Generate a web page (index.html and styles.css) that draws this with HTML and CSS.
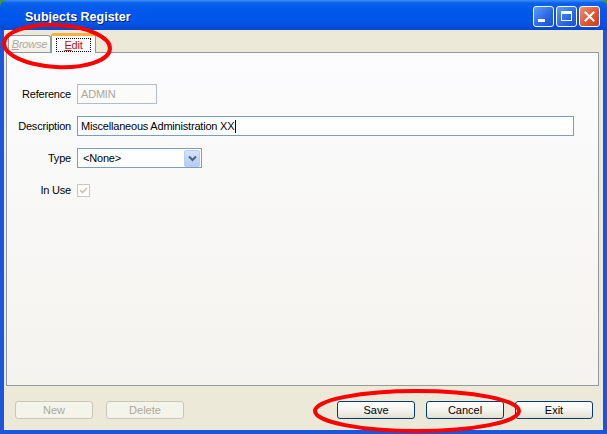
FILE: index.html
```html
<!DOCTYPE html>
<html lang="en">
<head>
  <meta charset="UTF-8">
  <title>Subjects Register</title>
  <link rel="stylesheet" href="styles.css">
</head>
<body>
  <div class="window">
    <div class="titlebar">
      <span class="title">Subjects Register</span>
      <div class="caption-buttons">
        <span class="cap cap-min"><span class="min-bar"></span></span>
        <span class="cap cap-max"><span class="max-box"></span></span>
        <span class="cap cap-close">
          <svg width="11" height="11" viewBox="0 0 11 11"><path d="M1.5 1.5 L9.5 9.5 M9.5 1.5 L1.5 9.5" stroke="#fff" stroke-width="2" stroke-linecap="square"/></svg>
        </span>
      </div>
    </div>

    <div class="client">
      <div class="tabs">
        <span class="tab tab-off"><u>B</u>rowse</span>
        <span class="tab tab-on"><span class="focus"><u>E</u>dit</span></span>
      </div>

      <div class="panel">
        <div class="form">
          <label class="lbl">Reference</label>
          <div class="field field-ref">ADMIN</div>

          <label class="lbl">Description</label>
          <div class="field field-desc">Miscellaneous Administration XX<span class="caret"></span></div>

          <label class="lbl">Type</label>
          <div class="field field-select">
            <span class="select-text">&lt;None&gt;</span>
            <span class="select-btn">
              <svg width="9" height="7" viewBox="0 0 9 7"><path d="M1 1.5 L4.5 5 L8 1.5" fill="none" stroke="#4d6185" stroke-width="2"/></svg>
            </span>
          </div>

          <label class="lbl">In Use</label>
          <div class="check-cell">
            <span class="check">
              <svg width="11" height="11" viewBox="0 0 11 11"><path d="M2 5 L4.5 7.5 L9 3" fill="none" stroke="#c4c2b5" stroke-width="1.6"/></svg>
            </span>
          </div>
        </div>
      </div>

      <div class="buttons">
        <div class="btn-group btn-group-left">
          <button class="btn" disabled>New</button>
          <button class="btn" disabled>Delete</button>
        </div>
        <div class="btn-group">
          <button class="btn">Save</button>
          <button class="btn">Cancel</button>
          <button class="btn">Exit</button>
        </div>
      </div>
    </div>

    <svg class="marks" width="607" height="434" viewBox="0 0 607 434">
      <ellipse cx="57" cy="46" rx="53" ry="21" fill="none" stroke="#f00" stroke-width="4" transform="rotate(3 57 46)"/>
      <ellipse cx="417" cy="411" rx="102" ry="20" fill="none" stroke="#f00" stroke-width="4"/>
    </svg>
  </div>
</body>
</html>
```

FILE: styles.css
```css
* {
  box-sizing: border-box;
}
body {
  margin: 0;
  background: #3a9a3a;
  font-family: 'Liberation Sans', Arial, sans-serif;
  font-size: 11px;
  letter-spacing: -0.2px;
  color: #000;
}
.window {
  position: relative;
  width: 607px;
  height: 434px;
  display: flex;
  flex-direction: column;
}

/* title bar */
.titlebar {
  height: 30px;
  display: flex;
  align-items: center;
  justify-content: space-between;
  padding: 0 7px 0 25px;
  border-radius: 7px 7px 0 0;
  background: linear-gradient(#3d8ef8 0, #0a62ea 3px, #0058ee 10px, #0255e8 22px, #0348d2 30px);
}
.title {
  color: #fff;
  font-weight: bold;
  font-size: 12.5px;
  letter-spacing: 0;
  padding-top: 4px;
  text-shadow: 1px 1px 0 #0a1e8a;
}
.caption-buttons {
  display: flex;
  gap: 2px;
  padding-top: 2px;
}
.cap {
  width: 21px;
  height: 21px;
  border: 1px solid #fff;
  border-radius: 3px;
  background: linear-gradient(135deg, #5e9cfb, #2a66e6 60%, #1b50d0);
  display: flex;
  align-items: center;
  justify-content: center;
  position: relative;
}
.min-bar {
  position: absolute;
  left: 4px;
  bottom: 4px;
  width: 7px;
  height: 3px;
  background: #fff;
}
.max-box {
  width: 11px;
  height: 10px;
  border: 1px solid #fff;
  border-top-width: 3px;
}
.cap-close {
  background: linear-gradient(135deg, #f08c6c, #dd5530 60%, #c7401c);
}

/* client area */
.client {
  flex: 1;
  display: flex;
  flex-direction: column;
  background: #ece9d8;
  border: 4px solid #1b56dc;
  border-top: none;
}
.tabs {
  display: flex;
  align-items: flex-end;
  height: 22px;
  padding-left: 4px;
}
.tab {
  border: 1px solid #919b9c;
  border-bottom: none;
  border-radius: 3px 3px 0 0;
  display: flex;
  align-items: center;
  justify-content: center;
}
.tab-off {
  width: 43px;
  height: 17px;
  color: #aca899;
  font-style: italic;
  background: linear-gradient(#fff, #f1efe6);
}
.tab-on {
  width: 45px;
  height: 20px;
  margin-bottom: -1px;
  background: #fcfcfe;
  border-top: 3px solid #f5b041;
  color: #b3121a;
  position: relative;
  z-index: 1;
}
.focus {
  width: 35px;
  height: 14px;
  border: 1px dotted #000;
  display: flex;
  align-items: center;
  justify-content: center;
  margin-top: 1px;
}

.panel {
  flex: 1;
  margin: 0 0 0 2px;
  width: 593px;
  border: 1px solid #919b9c;
  background: linear-gradient(#fcfcfe, #f4f3ee);
  padding: 31px 24px 0 0;
}
.form {
  display: grid;
  grid-template-columns: 64px 1fr;
  column-gap: 6px;
  row-gap: 12px;
  grid-auto-rows: 20px;
}
.lbl {
  text-align: right;
  align-self: center;
  white-space: nowrap;
}
.field {
  height: 20px;
  border: 1px solid #7f9db9;
  background: #fff;
  display: flex;
  align-items: center;
  padding-left: 3px;
}
.field-ref {
  width: 80px;
  color: #aca899;
  border-color: #b2bdcc;
  background: #fbfbf9;
}
.caret {
  width: 1px;
  height: 13px;
  background: #000;
  margin-left: 1px;
}
.field-select {
  width: 125px;
  justify-content: space-between;
  padding: 1px;
  padding-left: 5px;
}
.select-btn {
  width: 16px;
  height: 17px;
  border-radius: 2px;
  background: linear-gradient(#d5e3fc, #b5cbf5);
  border: 1px solid #b9cdf5;
  display: flex;
  align-items: center;
  justify-content: center;
}
.check-cell {
  display: flex;
  align-items: center;
}
.check {
  width: 13px;
  height: 13px;
  border: 1px solid #cac8bb;
  background: #fff;
  display: flex;
  align-items: center;
  justify-content: center;
}

/* bottom buttons */
.buttons {
  display: flex;
  justify-content: space-between;
  padding: 15px 10px 11px 11px;
}
.btn-group {
  display: flex;
  gap: 11px;
}
.btn-group-left {
  gap: 13px;
}
.btn {
  width: 78px;
  height: 18px;
  padding: 0;
  font-family: 'Liberation Sans', Arial, sans-serif;
  font-size: 11px;
  color: #000;
  border: 1px solid #003c74;
  border-radius: 3px;
  background: linear-gradient(#fff, #f4f3ee 50%, #e3e0d2);
}
.btn:disabled {
  color: #aca899;
  border-color: #c9c7ba;
  background: #f5f4ea;
}

/* annotation overlay */
.marks {
  position: absolute;
  left: 0;
  top: 0;
  pointer-events: none;
  z-index: 5;
}
```
